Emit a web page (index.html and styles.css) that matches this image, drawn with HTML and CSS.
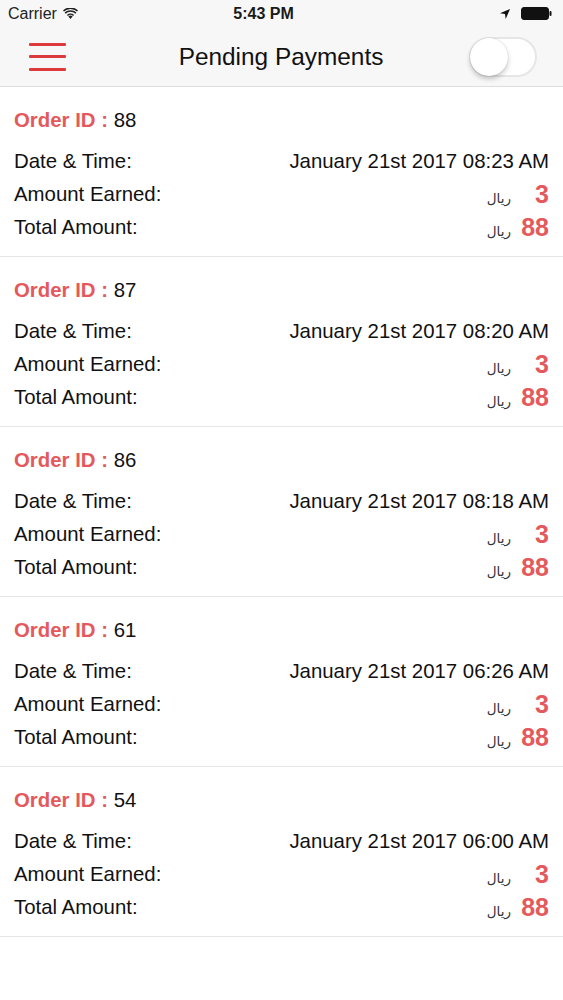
FILE: index.html
```html
<!DOCTYPE html>
<html lang="en">
<head>
    <meta charset="UTF-8">
    <meta name="viewport" content="width=device-width, initial-scale=1.0">
    <title>Pending Payments</title>
    <link rel="stylesheet" href="styles.css">
</head>
<body>
    <header class="top">
        <div class="status-bar">
            <div class="status-left">
                <span>Carrier</span>
                <svg class="wifi" width="15" height="11" viewBox="0 0 15 11">
                    <path d="M7.5 11 L5.4 8.6 A3 3 0 0 1 9.6 8.6 Z" fill="#222"/>
                    <path d="M3.9 6.9 A5.2 5.2 0 0 1 11.1 6.9 L10.1 8 A3.8 3.8 0 0 0 4.9 8 Z" fill="#222"/>
                    <path d="M1.6 4.6 A8.4 8.4 0 0 1 13.4 4.6 L12.4 5.7 A7 7 0 0 0 2.6 5.7 Z" fill="#222"/>
                    <path d="M0 2.4 A10.8 10.8 0 0 1 15 2.4 L14 3.5 A9.4 9.4 0 0 0 1 3.5 Z" fill="#222"/>
                </svg>
            </div>
            <div class="status-time">5:43 PM</div>
            <div class="status-right">
                <svg width="10" height="10" viewBox="0 0 10 10">
                    <path d="M10 0 L0 4.3 L5 5 L5.7 10 Z" fill="#111"/>
                </svg>
                <svg width="31" height="13" viewBox="0 0 31 13">
                    <rect x="0.5" y="0.5" width="27" height="12" rx="2.5" fill="#111" stroke="#111"/>
                    <rect x="28.5" y="4" width="2" height="5" rx="1" fill="#111"/>
                </svg>
            </div>
        </div>
        <nav class="nav-bar">
            <button class="menu-btn" aria-label="Menu">
                <span></span><span></span><span></span>
            </button>
            <h1 class="title">Pending Payments</h1>
            <label class="switch">
                <input type="checkbox">
                <span class="knob"></span>
            </label>
        </nav>
    </header>

    <main class="list" id="list"></main>

    <script>
        var orders = [
            { id: 88, date: "January 21st 2017 08:23 AM", earned: 3, total: 88 },
            { id: 87, date: "January 21st 2017 08:20 AM", earned: 3, total: 88 },
            { id: 86, date: "January 21st 2017 08:18 AM", earned: 3, total: 88 },
            { id: 61, date: "January 21st 2017 06:26 AM", earned: 3, total: 88 },
            { id: 54, date: "January 21st 2017 06:00 AM", earned: 3, total: 88 }
        ];

        function money(value) {
            return '<span class="money"><span class="currency">ريال</span><span class="amount">' + value + '</span></span>';
        }

        var html = "";
        orders.forEach(function(order) {
            html += '<section class="card">' +
                '<div class="order-id"><b>Order ID : </b>' + order.id + '</div>' +
                '<div class="row"><span>Date &amp; Time:</span><span>' + order.date + '</span></div>' +
                '<div class="row"><span>Amount Earned:</span>' + money(order.earned) + '</div>' +
                '<div class="row"><span>Total Amount:</span>' + money(order.total) + '</div>' +
                '</section>';
        });
        document.getElementById("list").innerHTML = html;
    </script>
</body>
</html>
```

FILE: styles.css
```css
body {
    margin: 0;
    background: #fff;
    font-family: "Liberation Sans", Arial, sans-serif;
    color: #111;
}

.top {
    background: #f7f7f8;
    border-bottom: 1px solid #dedede;
}

.status-bar {
    height: 27px;
    display: flex;
    align-items: center;
    justify-content: space-between;
    padding: 0 11px 0 8px;
    font-size: 16px;
    color: #222;
    position: relative;
}

.status-left {
    display: flex;
    align-items: center;
    gap: 6px;
}

.status-time {
    position: absolute;
    left: 0;
    right: 36px;
    text-align: center;
    font-weight: bold;
    color: #1a1a1a;
}

.status-right {
    display: flex;
    align-items: center;
    gap: 11px;
}

.nav-bar {
    height: 59px;
    display: grid;
    grid-template-columns: 1fr auto 1fr;
    align-items: center;
    padding: 0 26px 0 29px;
}

.menu-btn {
    width: 37px;
    height: 28px;
    padding: 0;
    border: 0;
    background: none;
    display: flex;
    flex-direction: column;
    justify-content: space-between;
}

.menu-btn span {
    display: block;
    height: 3px;
    background: #dd3a3e;
    border-radius: 1px;
}

.title {
    margin: 0;
    font-size: 24.4px;
    font-weight: normal;
    color: #111;
    position: relative;
    left: -2px;
}

.switch {
    justify-self: end;
    position: relative;
    width: 68px;
    height: 40px;
}

.switch input {
    display: none;
}

.switch:before {
    content: "";
    position: absolute;
    inset: 0;
    border: 2px solid #e6e6e6;
    border-radius: 21px;
    background: #fff;
}

.knob {
    position: absolute;
    left: 1px;
    top: 1px;
    width: 38px;
    height: 38px;
    border-radius: 50%;
    background: #fff;
    box-shadow: 0 3px 5px rgba(0, 0, 0, 0.22), 0 0 1px rgba(0, 0, 0, 0.2);
}

.card {
    padding: 20px 14px 12px;
    border-bottom: 1px solid #e6e6e6;
    font-size: 20.4px;
}

.order-id {
    line-height: 26px;
    margin-bottom: 12px;
}

.order-id b {
    color: #e45a5c;
}

.row {
    height: 33px;
    display: flex;
    align-items: center;
    justify-content: space-between;
}

.money {
    display: flex;
    align-items: center;
    gap: 10px;
}

.currency {
    font-family: "DejaVu Sans", sans-serif;
    font-size: 13.5px;
    color: #333;
    position: relative;
    top: 3px;
}

.amount {
    min-width: 28px;
    text-align: right;
    font-size: 25px;
    font-weight: bold;
    color: #e45a5c;
}
```
